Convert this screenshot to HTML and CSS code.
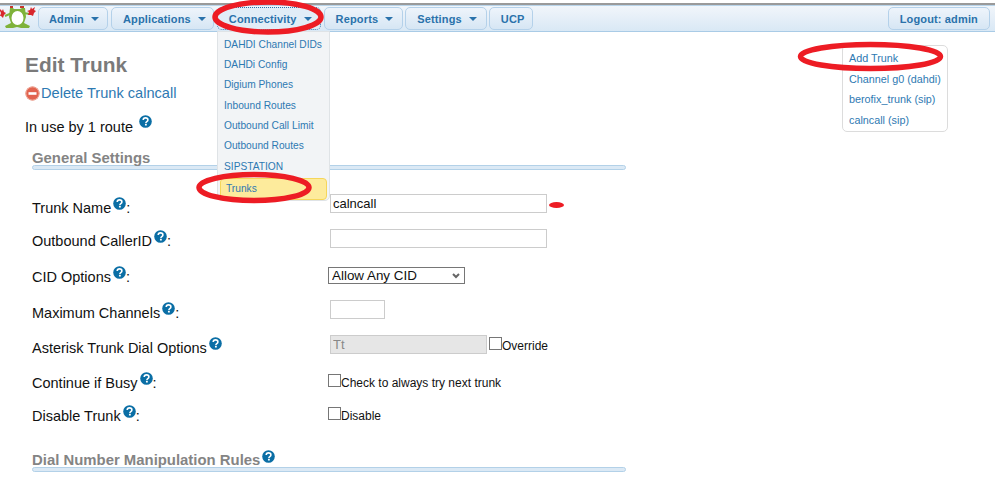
FILE: index.html
```html
<!DOCTYPE html>
<html lang="en">
<head>
<meta charset="utf-8">
<title>Edit Trunk</title>
<link rel="stylesheet" href="styles.css">
</head>
<body>
<svg width="0" height="0" class="defs">
  <defs>
    <symbol id="help" viewBox="0 0 12 12">
      <circle cx="6" cy="6" r="5.8" fill="#0a6ea5"/>
      <path d="M3.9 4.7C3.9 3.4 4.9 2.7 6 2.7c1.2 0 2.2.7 2.2 1.9 0 1.5-1.8 1.5-1.8 2.7" fill="none" stroke="#fff" stroke-width="1.5"/>
      <rect x="5.5" y="8.1" width="1.7" height="1.6" fill="#fff"/>
    </symbol>
  </defs>
</svg>
<header class="topbar">
  <svg class="logo" width="36" height="28" viewBox="0 0 36 28">
    <path d="M12 8L5 11M23 8L30 9" fill="none" stroke="#7fb23a" stroke-width="2"/>
    <path d="M0 4l2 2 1-2 1 3 2 1-2 2-1 3-2-2-1 0 1-3-1-2zM35 2l-1 3 2 1-2 2-1 3-2-1-3 0 1-3-2-1 3-1 1-3 1 2z" fill="#d8262c"/>
    <path d="M10 3h3l1 1h6l2-1h3l1 9-2 6 6 3-1 2-8 0-4-1-4 1-7 0-1-2 6-3-2-6z" fill="#7fb23a"/>
    <path d="M10 1h3v2h-3zM20 1h4v2h-4z" fill="#c8362c"/>
    <ellipse cx="17.500" cy="13" rx="6" ry="7" fill="#fff"/>
  </svg>
  <nav class="menu">
    <a class="tab tab-admin">Admin<i class="caret"></i></a>
    <a class="tab tab-apps">Applications<i class="caret"></i></a>
    <a class="tab tab-active">Connectivity<i class="caret"></i></a>
    <a class="tab">Reports<i class="caret"></i></a>
    <a class="tab tab-tight">Settings<i class="caret"></i></a>
    <a class="tab tab-tight tab-plain">UCP</a>
  </nav>
  <a class="tab logout">Logout: admin</a>
</header>

<ul class="dropdown">
  <li>DAHDI Channel DIDs</li>
  <li>DAHDi Config</li>
  <li>Digium Phones</li>
  <li>Inbound Routes</li>
  <li>Outbound Call Limit</li>
  <li>Outbound Routes</li>
  <li>SIPSTATION</li>
  <li class="current">Trunks</li>
</ul>

<div class="page">
  <main class="content">
    <h2 class="title">Edit Trunk</h2>
    <a class="delete">
      <svg class="delete-icon" width="15" height="15" viewBox="0 0 15 15"><circle cx="7.5" cy="7.5" r="7" fill="#e2634f"/><circle cx="7.5" cy="7.5" r="6.6" fill="none" stroke="#eeb3a4" stroke-width=".9"/><rect x="3.5" y="6.200" width="8" height="2.600" fill="#fff"/></svg>Delete Trunk calncall
    </a>
    <p class="usage">In use by 1 route <svg class="help help-gap"><use href="#help"/></svg></p>
    <h3 class="section">General Settings</h3>
    <div class="rule"></div>
    <div class="form">
      <div class="row r1"><span class="label">Trunk Name<svg class="help"><use href="#help"/></svg>:</span><span class="field"><input class="text wide dark" value="calncall"></span></div>
      <div class="row r2"><span class="label">Outbound CallerID<svg class="help"><use href="#help"/></svg>:</span><span class="field"><input class="text wide"></span></div>
      <div class="row r3"><span class="label">CID Options<svg class="help"><use href="#help"/></svg>:</span><span class="field field-flush"><select class="select"><option>Allow Any CID</option></select></span></div>
      <div class="row r4"><span class="label">Maximum Channels<svg class="help"><use href="#help"/></svg>:</span><span class="field"><input class="text short"></span></div>
      <div class="row r5"><span class="label">Asterisk Trunk Dial Options<svg class="help"><use href="#help"/></svg></span><span class="field"><input class="text wider" value="Tt" disabled><label class="check"><input type="checkbox" class="box">Override</label></span></div>
      <div class="row r6"><span class="label">Continue if Busy<svg class="help"><use href="#help"/></svg>:</span><span class="field field-flush"><label class="check"><input type="checkbox" class="box">Check to always try next trunk</label></span></div>
      <div class="row r7"><span class="label">Disable Trunk<svg class="help"><use href="#help"/></svg>:</span><span class="field field-flush"><label class="check"><input type="checkbox" class="box">Disable</label></span></div>
    </div>
    <h3 class="section">Dial Number Manipulation Rules<svg class="help"><use href="#help"/></svg></h3>
    <div class="rule"></div>
  </main>
  <aside class="sidebar">
    <a>Add Trunk</a>
    <a>Channel g0 (dahdi)</a>
    <a>berofix_trunk (sip)</a>
    <a>calncall (sip)</a>
  </aside>
</div>

<svg class="marks" width="995" height="483" viewBox="0 0 995 483">
  <g fill="none" stroke="#ed1c24" stroke-width="5.500">
    <ellipse cx="268" cy="17" rx="53" ry="15"/>
    <ellipse cx="254" cy="187.500" rx="55" ry="13"/>
    <ellipse cx="870.500" cy="56.500" rx="70" ry="12"/>
  </g>
  <ellipse cx="556.500" cy="205" rx="7.500" ry="3" fill="#ed1c24"/>
</svg>
</body>
</html>
```

FILE: styles.css
```css
* { box-sizing: border-box; }
html, body { margin: 0; padding: 0; }
body {
  position: relative;
  width: 995px;
  height: 483px;
  padding-top: 3px;
  overflow: hidden;
  background: #fff;
  color: #111;
  font-family: "Liberation Sans", Arial, sans-serif;
  font-size: 14.5px;
}
.defs { position: absolute; }
.topbar {
  display: flex;
  align-items: center;
  height: 29px;
  padding: 1px 5px 0 0;
  background: linear-gradient(#f2f6fb, #d9e8f5);
  border-top: 2px solid #9a9a9a;
  border-bottom: 1px solid #a9cbe6;
  box-shadow: inset 0 1px 0 #b8d4ea;
}
.logo { flex: none; margin: 0 2px 0 0; }
.menu { display: flex; gap: 3px; }
.tab {
  display: flex;
  align-items: center;
  height: 23px;
  padding: 0 9px 0 11px;
  border: 1px solid #b4d1ea;
  border-radius: 5px;
  background: linear-gradient(#eef4fb, #d6e6f4);
  color: #2a72ab;
  font-size: 11px;
  font-weight: bold;
  letter-spacing: .15px;
}
.tab-active { padding-right: 8px; border: 1px dotted #2a72ab; background: #e1edf7; }
.tab-admin { padding: 0 8px 0 10px; }
.tab-apps { padding-right: 7px; }
.tab-tight { margin-left: -1px; }
.tab-plain { padding: 0 7px 0 11px; }
.caret {
  display: block;
  margin: 0 0 0 7px;
  border: 4px solid transparent;
  border-top: 4px solid #2a72ab;
  border-bottom: 0;
}
.logout { margin-left: auto; padding: 0 11px; }
.dropdown {
  position: absolute;
  left: 217px;
  top: 31px;
  width: 113px;
  height: 170px;
  margin: 0;
  padding: 2.500px 2px 0 2px;
  list-style: none;
  background: #f2f4f6;
  border: 1px solid #dfe3e6;
  border-radius: 0 0 5px 5px;
  z-index: 2;
}
.dropdown li {
  height: 20.4px;
  padding: 0 0 0 4px;
  color: #2e79b2;
  font-size: 10.2px;
  line-height: 20.4px;
  white-space: nowrap;
}
.dropdown .current {
  height: 22px;
  margin-top: 1px;
  padding-left: 5px;
  background: #fdeb9c;
  border: 1px solid #f5d65a;
  border-radius: 4px;
  line-height: 20px;
}
.page { display: flex; align-items: flex-start; }
.content { flex: none; width: 842px; padding: 21px 0 0 25px; }
.title { margin: 0; color: #7a7a7a; font-size: 20.9px; line-height: 24px; font-weight: bold; }
.delete { display: flex; align-items: center; margin-top: 7px; height: 18px; color: #2e79b2; font-size: 14.6px; }
.delete-icon { flex: none; margin: 0 1px 0 0; }
.usage { margin: 13px 0 0; height: 16px; line-height: 16px; }
.help { width: 13px; height: 13px; vertical-align: 3px; margin-left: 2px; }
.help-gap { margin-left: 2px; vertical-align: 4px; }
.section {
  display: flex;
  height: 15px;
  margin: 20px 0 -1px 7px;
  color: #848484;
  font-size: 14.9px;
  font-weight: bold;
  line-height: 15px;
  white-space: nowrap;
}
.section .help { margin-top: -3px; }
.rule {
  width: 594px;
  height: 5px;
  margin-left: 7px;
  background: #dbe9f5;
  border: 1px solid #b3d1e8;
  border-radius: 3px;
}
.form { margin: 17px 0 0 7px; }
.row { display: grid; grid-template-columns: 298px 1fr; align-items: center; }
.r1 { height: 33px; }
.r2 { height: 36px; }
.r3 { height: 39px; }
.r4 { height: 28px; }
.r5 { height: 43px; }
.r6 { height: 31px; }
.r7 { height: 36px; }
.r1 .label { padding-top: 6.500px; }
.r4 .label { padding-top: 5.500px; }
.r2 .label { padding-top: 3.500px; }
.r5 .label { padding-top: 4.500px; }
.r7 .label { padding-bottom: 2px; }
.field { display: flex; align-items: center; }
.field-flush { margin-left: -2px; }
.text {
  height: 19px;
  padding: 0 2px;
  border: 1px solid #ccc;
  background: #fff;
  color: #111;
  font: 12px "Liberation Sans", Arial, sans-serif;
}
.dark { font-size: 13px; }
.wide { width: 217px; }
.short { width: 55px; }
.wider { width: 157px; background: #e6e6e6; color: #888; font-size: 13px; }
.select {
  width: 137px;
  height: 17px;
  padding: 0 0 0 3px;
  border: 1px solid #767676;
  background: #fff url("data:image/svg+xml,%3Csvg xmlns='http://www.w3.org/2000/svg' width='8' height='6'%3E%3Cpath d='M1 1l3 3 3-3' fill='none' stroke='%23666' stroke-width='2'/%3E%3C/svg%3E") no-repeat right 4px center;
  appearance: none;
  font: 13.4px "Liberation Sans", Arial, sans-serif;
  color: #111;
}
.check { display: flex; align-items: center; padding-top: 2px; font-size: 12px; color: #111; }
.box { width: 13px; height: 13px; margin: 0; appearance: none; border: 1px solid #767676; background: #fff; flex: none; }
.r5 .check { margin-left: 2px; }
.r5 .box, .r6 .box, .r7 .box { margin-top: -5px; }
.sidebar {
  display: flex;
  flex-direction: column;
  flex: none;
  width: 106px;
  height: 87px;
  margin-top: 13px;
  padding: 2px 0 0 6px;
  border: 1px solid #dcdcdc;
  border-radius: 5px;
}
.sidebar a { height: 20.6px; color: #2e79b2; font-size: 10.8px; line-height: 20.6px; white-space: nowrap; }
.marks { position: absolute; left: 0; top: 0; z-index: 3; pointer-events: none; }
```
